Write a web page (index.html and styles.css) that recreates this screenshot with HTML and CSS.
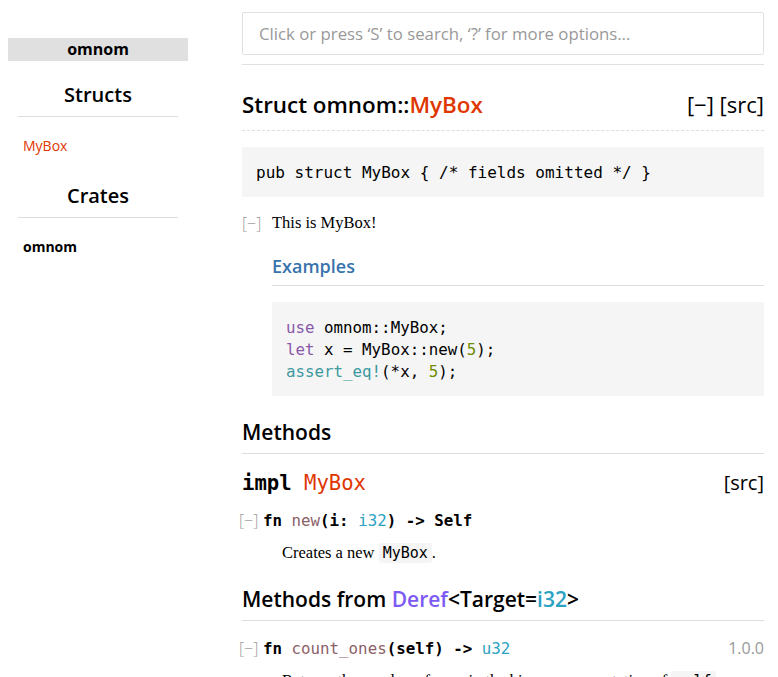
FILE: index.html
```html
<!DOCTYPE html>
<html lang="en">
<head>
<meta charset="utf-8">
<title>omnom::MyBox - Rust</title>
<link rel="stylesheet" href="styles.css">
</head>
<body>
<div class="page">
  <nav class="sidebar">
    <div class="location">omnom</div>
    <div class="block">
      <h3 class="block-title">Structs</h3>
      <ul class="block-list"><li><a class="struct-link" href="#">MyBox</a></li></ul>
    </div>
    <div class="block">
      <h3 class="block-title">Crates</h3>
      <ul class="block-list"><li><a class="crate-link" href="#">omnom</a></li></ul>
    </div>
  </nav>
  <main class="content">
    <div class="search-wrap">
      <input class="search-input" type="search" placeholder="Click or press ‘S’ to search, ‘?’ for more options…">
    </div>
    <h1 class="fqn">
      <span class="in-band">Struct omnom::<a class="struct" href="#">MyBox</a></span>
      <span class="out-of-band">[−] [src]</span>
    </h1>
    <pre class="decl">pub struct MyBox { /* fields omitted */ }</pre>
    <div class="doc-row">
      <span class="toggle">[−]</span>
      <div class="docblock">
        <p class="doc-p">This is MyBox!</p>
        <h2 class="section-header">Examples</h2>
        <pre class="example"><span class="kw">use</span> omnom::MyBox;
<span class="kw">let</span> x = MyBox::new(<span class="num">5</span>);
<span class="macro">assert_eq!</span>(*x, <span class="num">5</span>);</pre>
      </div>
    </div>
    <h2 class="small-section-header">Methods</h2>
    <h3 class="impl"><code class="impl-code">impl <a class="struct" href="#">MyBox</a></code><span class="out-of-band">[src]</span></h3>
    <div class="method-row first">
      <span class="toggle small">[−]</span>
      <code class="sig">fn <a class="fnname" href="#">new</a>(i: <a class="prim" href="#">i32</a>) -&gt; Self</code>
    </div>
    <div class="method-doc">
      <p class="doc-p">Creates a new <code class="inline">MyBox</code>.</p>
    </div>
    <h2 class="small-section-header deref">Methods from <a class="trait" href="#">Deref</a>&lt;Target=<a class="prim" href="#">i32</a>&gt;</h2>
    <div class="method-row">
      <span class="toggle small">[−]</span>
      <code class="sig">fn <a class="fnname" href="#">count_ones</a>(self) -&gt; <a class="prim" href="#">u32</a></code>
      <span class="since">1.0.0</span>
    </div>
    <div class="method-doc">
      <p class="doc-p">Returns the number of ones in the binary representation of <code class="inline">self</code>.</p>
    </div>
  </main>
</div>
</body>
</html>
```
FILE: styles.css
```css
html, body {
  margin: 0;
  padding: 0;
  background: #fff;
  color: #000;
}
body {
  font-family: "Liberation Serif", serif;
  font-size: 16px;
}
a { text-decoration: none; }
.page {
  display: flex;
  align-items: flex-start;
}
.sidebar {
  width: 180px;
  padding-left: 8px;
  padding-top: 38px;
  flex: none;
  font-family: "Open Sans", sans-serif;
}
.location {
  background: #e0e0e0;
  height: 23px;
  line-height: 23px;
  text-align: center;
  font-weight: 700;
  font-size: 16px;
  color: #000;
}
.block {
  margin: 0 10px;
}
.block-title {
  margin: 0;
  padding-top: 20px;
  padding-bottom: 7px;
  text-align: center;
  font-size: 20px;
  font-weight: 600;
  line-height: 28px;
  border-bottom: 1px solid #ddd;
}
.block-list {
  list-style: none;
  margin: 0;
  padding: 19px 0 6px 5px;
  font-size: 14px;
  line-height: 20px;
}
.struct-link { color: #df3600; }
.crate-link { color: #000; font-weight: 700; }
.content {
  margin-left: 54px;
  width: 522px;
  padding-top: 12px;
  font-family: "Liberation Serif", serif;
}
.search-wrap {
  padding-bottom: 9px;
  border-bottom: 1px solid #e0e0e0;
}
.search-input {
  box-sizing: border-box;
  width: 100%;
  height: 43px;
  margin: 0;
  border: 1px solid #e0e0e0;
  border-radius: 2px;
  padding: 0 16px 1px;
  font-family: "Open Sans", sans-serif;
  font-size: 16.8px;
  color: #000;
  outline: none;
  -webkit-appearance: none;
}
.search-input::placeholder { color: #999; }
.fqn {
  display: flex;
  justify-content: space-between;
  align-items: baseline;
  margin: 23px 0 16px;
  padding-bottom: 9px;
  border-bottom: 1px dashed #ddd;
  font-family: "Open Sans", sans-serif;
  font-size: 22.4px;
  line-height: 32px;
  font-weight: 600;
}
.fqn .struct { color: #df3600; }
.out-of-band {
  font-weight: 400;
  font-family: "Open Sans", sans-serif;
  font-size: 22px;
}
.decl {
  margin: 0;
  background: #f5f5f5;
  padding: 15px 14px 13px;
  font-family: "DejaVu Sans Mono", monospace;
  font-size: 16px;
  line-height: 22px;
}
.doc-row {
  display: flex;
  align-items: flex-start;
  margin-top: 15px;
}
.toggle {
  flex: none;
  width: 30px;
  font-family: "Open Sans", sans-serif;
  font-weight: 300;
  color: #999;
  font-size: 16px;
  line-height: 22px;
}
.toggle.small {
  width: 24px;
  margin-left: -3px;
}
.docblock { flex: 1; min-width: 0; }
.doc-p {
  margin: 0;
  font-size: 16.5px;
  line-height: 22px;
}
.section-header {
  margin: 19px 0 16px;
  padding-bottom: 6px;
  border-bottom: 1px solid #ddd;
  color: #3873ad;
  font-family: "Open Sans", sans-serif;
  font-size: 18px;
  font-weight: 600;
  line-height: 26px;
}
.example {
  margin: 0;
  background: #f5f5f5;
  padding: 15px 14px 13px;
  font-family: "DejaVu Sans Mono", monospace;
  font-size: 15.8px;
  line-height: 22px;
}
.kw { color: #8959a8; }
.num { color: #718c00; }
.macro { color: #3e999f; }
.small-section-header {
  margin: 21px 0 0;
  padding-bottom: 6px;
  border-bottom: 1px solid #ddd;
  font-family: "Open Sans", sans-serif;
  font-size: 21px;
  font-weight: 600;
  line-height: 30px;
}
.small-section-header.deref { margin-top: 20px; }
.trait { color: #7c5af3; }
.prim { color: #2ca2c3; }
.impl {
  display: flex;
  justify-content: space-between;
  align-items: baseline;
  margin: 15px 0 0;
  font-size: 20px;
  line-height: 28px;
}
.impl-code {
  font-family: "DejaVu Sans Mono", monospace;
  font-weight: 700;
  font-size: 20.6px;
}
.impl .struct { color: #df3600; font-weight: 500; }
.impl .out-of-band { font-size: 20px; }
.method-row {
  display: flex;
  align-items: baseline;
  margin-top: 16px;
}
.method-row.first { margin-top: 12px; }
.sig {
  flex: 1;
  font-family: "DejaVu Sans Mono", monospace;
  font-weight: 700;
  font-size: 15.8px;
  line-height: 22px;
}
.fnname { color: #8c6067; font-weight: 500; }
.sig .prim { font-weight: 500; }
.since {
  font-family: "Open Sans", sans-serif;
  color: #999;
  font-size: 16px;
}
.method-doc {
  margin: 10px 0 0 40px;
}
.inline {
  background: #f5f5f5;
  font-family: "DejaVu Sans Mono", monospace;
  font-size: 15px;
  padding: 1px 4px;
  border-radius: 3px;
}
```
